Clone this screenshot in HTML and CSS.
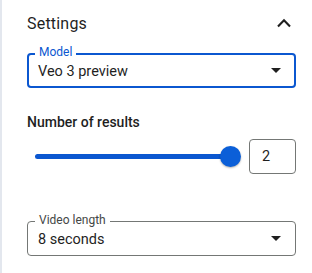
FILE: index.html
```html
<!DOCTYPE html>
<html lang="en">
<head>
  <meta charset="UTF-8" />
  <title>Settings</title>
  <link rel="stylesheet" href="styles.css">
</head>
<body>
  <div class="panel">
    <div class="panel-head">
      <h2>Settings</h2>
      <svg class="chevron" width="24" height="24" viewBox="0 0 24 24"><polyline points="6,14.5 12,8.3 18,14.5" fill="none" stroke="#1f1f1f" stroke-width="2.1"/></svg>
    </div>

    <div class="field focused">
      <span class="field-label">Model</span>
      <span class="field-value">Veo 3 preview</span>
      <span class="caret"></span>
    </div>

    <div class="slider-block">
      <div class="slider-title">Number of results</div>
      <div class="slider-row">
        <div class="track">
          <div class="thumb"></div>
        </div>
        <div class="num-box">2</div>
      </div>
    </div>

    <div class="field">
      <span class="field-label">Video length</span>
      <span class="field-value">8 seconds</span>
      <span class="caret"></span>
    </div>
  </div>
</body>
</html>
```

FILE: styles.css
```css
* {
  margin: 0;
  padding: 0;
  box-sizing: border-box;
}

body {
  font-family: Roboto, "Liberation Sans", sans-serif;
  color: #1f1f1f;
  background: #fff;
  width: 312px;
  height: 273px;
  overflow: hidden;
}

.panel {
  height: 273px;
  border-left: 2px solid #e3e7ee;
  padding: 12px 16px 0 25px;
}

.panel-head {
  display: flex;
  align-items: center;
  justify-content: space-between;
  height: 22px;
}

.panel-head h2 {
  font-size: 16px;
  font-weight: 400;
  letter-spacing: 0.2px;
}

.chevron {
  margin-top: 1px;
}

.field {
  position: relative;
  height: 35px;
  margin-top: 19px;
  border: 1px solid #747775;
  border-radius: 4px;
  display: flex;
  align-items: center;
  padding: 0 14px 0 10px;
}

.field.focused {
  border: 2px solid #0b57d0;
  padding-left: 9px;
  padding-right: 13px;
}

.field-label {
  position: absolute;
  left: 7px;
  top: -9px;
  padding: 0 4px;
  background: #fff;
  font-size: 12px;
  line-height: 14px;
  color: #444746;
}

.field.focused .field-label {
  left: 6px;
  top: -10px;
  color: #0b57d0;
}

.field-value {
  flex: 1;
  font-size: 14.5px;
  padding-top: 1px;
}

.caret {
  width: 0;
  height: 0;
  border-left: 5px solid transparent;
  border-right: 5px solid transparent;
  border-top: 5px solid #1f1f1f;
}

.slider-block {
  margin-top: 25px;
}

.slider-title {
  font-size: 14px;
  font-weight: 500;
  line-height: 18px;
}

.slider-row {
  display: flex;
  align-items: center;
  margin-top: 8px;
}

.track {
  position: relative;
  margin-left: 8px;
  width: 196px;
  height: 5px;
  border-radius: 3px;
  background: #0b57d0;
}

.thumb {
  position: absolute;
  right: -10px;
  top: -8px;
  width: 21px;
  height: 21px;
  border-radius: 50%;
  background: #0b5fd8;
  box-shadow: 0 1px 2px rgba(0, 0, 0, 0.3);
}

.num-box {
  margin-left: auto;
  width: 47px;
  height: 35px;
  border: 1px solid #747775;
  border-radius: 4px;
  font-size: 14.5px;
  line-height: 33px;
  padding-left: 12px;
}

.slider-block + .field {
  margin-top: 47px;
}
```
